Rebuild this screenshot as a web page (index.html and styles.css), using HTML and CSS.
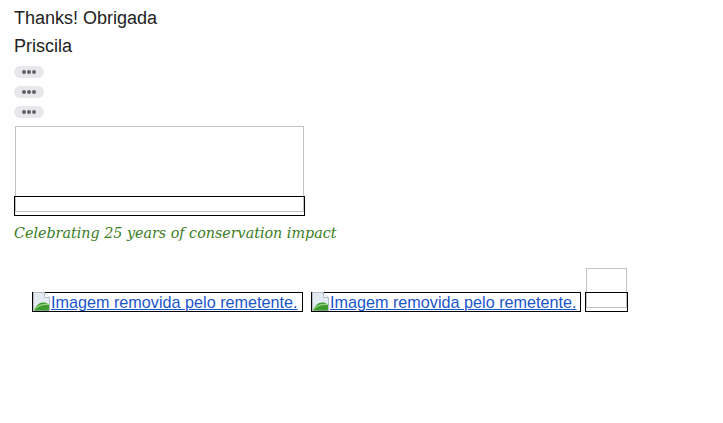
FILE: index.html
```html
<!DOCTYPE html>
<html>
<head>
<meta charset="utf-8">
<link rel="stylesheet" href="styles.css">
</head>
<body>
<div class="mail">
  <div class="line">Thanks! Obrigada</div>
  <div class="line">Priscila</div>
  <div class="pills">
    <div class="pill"><i></i><i></i><i></i></div>
    <div class="pill"><i></i><i></i><i></i></div>
    <div class="pill"><i></i><i></i><i></i></div>
  </div>
  <div class="frame">
    <div class="frame-gray"></div>
    <div class="frame-black"></div>
  </div>
  <div class="tagline">Celebrating 25 years of conservation impact</div>
  <div class="imgrow">
    <a class="broken wide" href="#">
      <svg class="bicon" width="17" height="19" viewBox="0 0 17 19"><path d="M0.5 0.5h11l5 5v13h-16z" fill="#e3eaf1" stroke="#b4bcc4"/><path d="M11.5 0.5v5h5" fill="#fff" stroke="#b4bcc4"/><path d="M1 18.5c2-5 5-8 9-8s5 1.5 6 3v5z" fill="#3f9a2f"/><path d="M1 17.5c4-4 8-6 15-5" stroke="#9ad486" stroke-width="1.2" fill="none"/></svg><span>Imagem removida pelo remetente.</span>
    </a>
    <a class="broken second" href="#">
      <svg class="bicon" width="17" height="19" viewBox="0 0 17 19"><path d="M0.5 0.5h11l5 5v13h-16z" fill="#e3eaf1" stroke="#b4bcc4"/><path d="M11.5 0.5v5h5" fill="#fff" stroke="#b4bcc4"/><path d="M1 18.5c2-5 5-8 9-8s5 1.5 6 3v5z" fill="#3f9a2f"/><path d="M1 17.5c4-4 8-6 15-5" stroke="#9ad486" stroke-width="1.2" fill="none"/></svg><span>Imagem removida pelo remetente.</span>
    </a>
    <div class="small">
      <div class="small-gray"></div>
      <div class="small-black"></div>
    </div>
  </div>
</div>
</body>
</html>
```
FILE: styles.css
```css
html, body { margin: 0; padding: 0; background: #fff; }
.mail {
  padding: 4px 14px;
  font-family: "Liberation Sans", Arial, sans-serif;
  color: #222;
}
.line { font-size: 18px; line-height: 28px; height: 28px; }
.pills { display: flex; flex-direction: column; gap: 8px; margin-top: 6px; }
.pill {
  width: 30px; height: 12px; border-radius: 6px; background: #e8e8ea;
  display: flex; align-items: center; justify-content: center; gap: 1px;
}
.pill i { display: block; width: 4px; height: 4px; border-radius: 50%; background: #5f6368; }
.frame { margin-top: 8px; width: 291px; }
.frame-gray { margin-left: 1px; width: 287px; height: 84px; border: 1px solid #c3c3c3; }
.frame-black { margin-top: -16px; width: 289px; height: 18px; border: 1px solid #000; }
.tagline {
  margin-top: 8px;
  font-family: "DejaVu Serif", Georgia, serif;
  font-style: italic;
  font-size: 14.3px;
  line-height: 18px;
  color: #3b7d23;
}
.imgrow { display: flex; align-items: flex-end; margin-top: 26px; margin-left: 18px; }
.broken {
  display: flex; align-items: flex-end;
  height: 18px; border: 1px solid #000;
  color: #1a55cc; text-decoration: underline;
  font-size: 16.2px; line-height: 18px;
}
.wide { width: 269px; }
.second { width: 268px; margin-left: 8px; }
.bicon { flex: none; margin: 0 1px 0 0; align-self: flex-end; }
.small { margin-left: 4px; width: 43px; }
.small-gray { margin-left: 1px; width: 39px; height: 38px; border: 1px solid #c3c3c3; }
.small-black { margin-top: -16px; width: 41px; height: 18px; border: 1px solid #000; }
```
